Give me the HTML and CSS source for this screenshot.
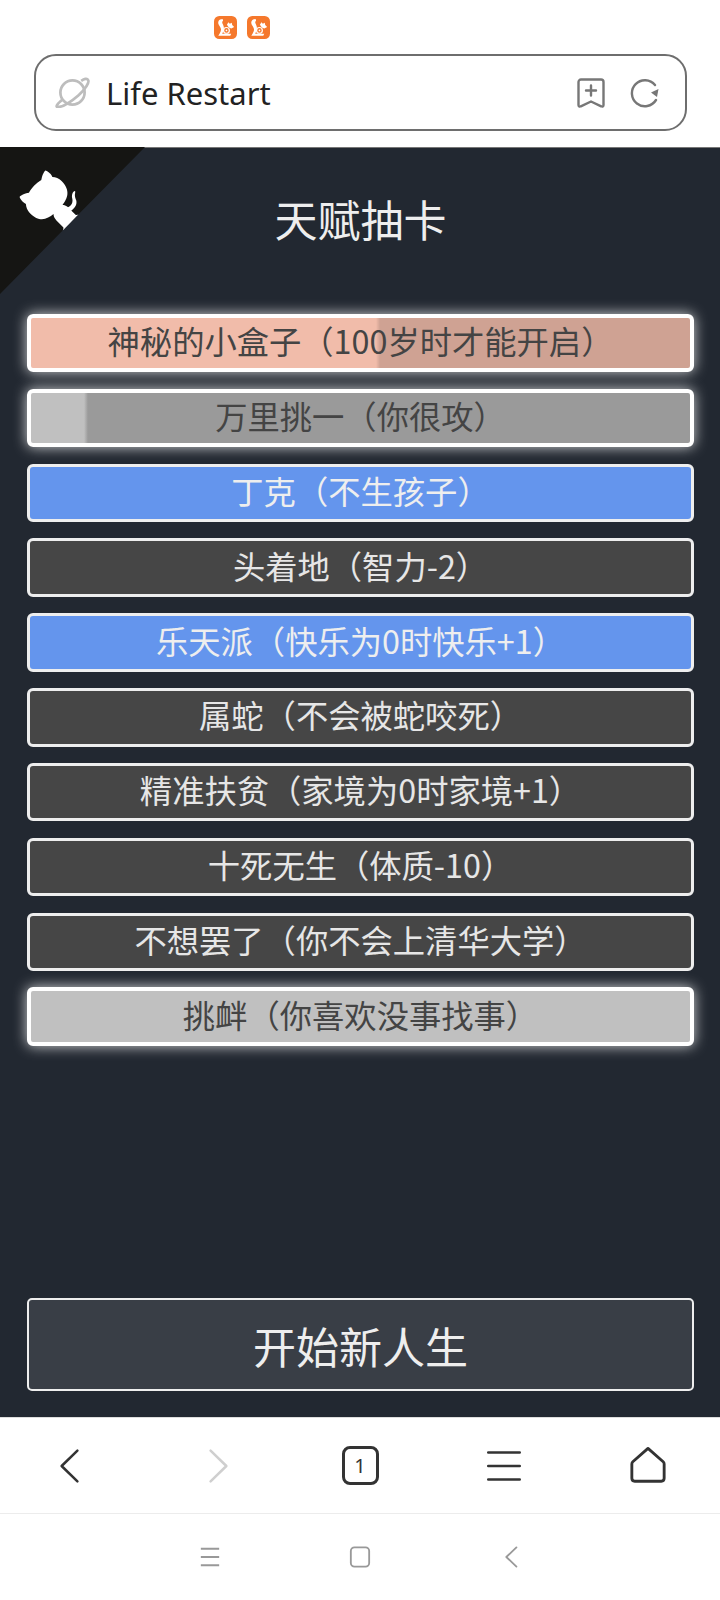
FILE: index.html
```html
<!DOCTYPE html>
<html lang="zh-CN">
<head>
  <meta charset="UTF-8">
  <meta name="viewport" content="width=device-width, initial-scale=1.0">
  <title>Life Restart</title>
  <link rel="stylesheet" href="styles.css">
</head>
<body>
  <!-- browser top -->
  <header class="top">
    <div class="status">
      <svg class="uc" viewBox="0 0 24 24"><rect width="24" height="24" rx="5.5" fill="#f5782c"/><path d="M9 3C5 3 3.500 6 5 9c1.500 2.500 3 4 2 7-.5 1.500-1.500 3-2.500 4.500H17l1-2H8.500C10.500 15 11 12 9.500 9 8.500 7.500 8 6 9.500 5z" fill="#fff"/><path d="M13.500 9l1.500-2.500 1.500 1.500 2-1 .5 2.500 2 2-3 1.500-2.500-1z" fill="#fff"/><circle cx="13" cy="15" r="3" fill="none" stroke="#fff" stroke-width="1.300"/><circle cx="13" cy="15" r=".9" fill="#fff"/></svg>
      <svg class="uc" viewBox="0 0 24 24"><rect width="24" height="24" rx="5.5" fill="#f5782c"/><path d="M9 3C5 3 3.500 6 5 9c1.500 2.500 3 4 2 7-.5 1.500-1.500 3-2.500 4.500H17l1-2H8.500C10.500 15 11 12 9.500 9 8.500 7.500 8 6 9.500 5z" fill="#fff"/><path d="M13.500 9l1.500-2.500 1.500 1.500 2-1 .5 2.500 2 2-3 1.500-2.500-1z" fill="#fff"/><circle cx="13" cy="15" r="3" fill="none" stroke="#fff" stroke-width="1.300"/><circle cx="13" cy="15" r=".9" fill="#fff"/></svg>
    </div>
    <div class="address">
      <svg class="planet" viewBox="0 0 36 32" fill="none" stroke="#bdbdbd" stroke-width="2.800">
        <circle cx="18" cy="16" r="12.500"/>
        <path d="M8 23C2 28 0 31 3 31c5 0 14-6 21-12S36 5 34 3c-1-2-4-1-7 1"/>
      </svg>
      <span class="address-text">Life Restart</span>
      <svg class="bookmark" viewBox="0 0 28 30" fill="none" stroke="#777" stroke-width="2.400" stroke-linejoin="round" stroke-linecap="round">
        <path d="M4 1.500h20a2.500 2.500 0 0 1 2.500 2.500v23c0 1.500-1 2-2.300 1.300L14 23.500 3.800 28.300C2.500 29 1.500 28.500 1.500 27V4A2.500 2.500 0 0 1 4 1.500z"/>
        <path d="M14 7.500v10M9 12.500h10"/>
      </svg>
      <svg class="reload" viewBox="0 0 30 30" fill="none" stroke="#777" stroke-width="2.400" stroke-linecap="round">
        <path d="M26 22A13 13 0 1 1 25 7"/>
        <path d="M28.500 11l-1.500 8-6-4.500z" fill="#777" stroke="none"/>
      </svg>
    </div>
  </header>

  <main class="game">
    <!-- github corner -->
    <svg class="corner" viewBox="0 0 250 250" preserveAspectRatio="none">
      <path d="M0,0 L115,115 L130,115 L142,142 L250,250 L250,0 Z" fill="#151513"/>
      <path d="M128.3,109.0 C113.8,99.7 119.0,89.6 119.0,89.6 C122.0,82.7 120.5,78.6 120.5,78.6 C119.2,72.0 123.4,76.3 123.4,76.3 C127.3,80.9 125.5,87.3 125.5,87.3 C122.9,97.6 130.6,101.9 134.4,103.2" fill="#fff"/>
      <path d="M115.0,115.0 C114.9,115.1 118.7,116.5 119.8,115.4 L133.7,101.6 C136.9,99.2 139.9,98.4 142.2,98.6 C133.8,88.0 127.5,74.4 143.8,58.0 C148.5,53.4 154.0,51.2 159.7,51.0 C160.3,49.4 163.2,43.6 171.4,40.1 C171.4,40.1 176.1,42.5 178.8,56.2 C183.1,58.6 187.2,61.8 190.9,65.4 C194.5,69.0 197.7,73.2 200.1,77.6 C213.8,80.2 216.3,84.9 216.3,84.9 C212.7,93.1 206.9,96.0 205.4,96.6 C205.1,102.4 203.0,107.8 198.3,112.5 C181.9,128.9 168.3,122.5 157.7,114.1 C157.9,116.9 156.7,120.9 152.7,124.9 L141.0,136.5 C139.8,137.7 141.6,141.9 141.8,141.8 Z" fill="#fff"/>
    </svg>

    <h1 class="title">天赋抽卡</h1>

    <ul class="talents">
      <li class="talent legend">神秘的小盒子（100岁时才能开启）</li>
      <li class="talent silver">万里挑一（你很攻）</li>
      <li class="talent blue">丁克（不生孩子）</li>
      <li class="talent plain">头着地（智力-2）</li>
      <li class="talent blue">乐天派（快乐为0时快乐+1）</li>
      <li class="talent plain">属蛇（不会被蛇咬死）</li>
      <li class="talent plain">精准扶贫（家境为0时家境+1）</li>
      <li class="talent plain">十死无生（体质-10）</li>
      <li class="talent plain">不想罢了（你不会上清华大学）</li>
      <li class="talent gray">挑衅（你喜欢没事找事）</li>
    </ul>

    <button class="start">开始新人生</button>
  </main>

  <!-- browser bottom -->
  <nav class="toolbar">
    <svg class="tool" viewBox="0 0 40 40" fill="none" stroke="#333" stroke-width="2.800" stroke-linecap="round" stroke-linejoin="round"><path d="M26 3L8.500 20 26 37"/></svg>
    <svg class="tool" viewBox="0 0 40 40" fill="none" stroke="#cfcfcf" stroke-width="2.800" stroke-linecap="round" stroke-linejoin="round"><path d="M14 3L31.500 20 14 37"/></svg>
    <div class="tab-count">1</div>
    <svg class="tool" viewBox="0 0 40 40" fill="none" stroke="#333" stroke-width="2.800" stroke-linecap="round"><path d="M2.500 5h35M2.500 20h35M2.500 35h35"/></svg>
    <svg class="tool home" viewBox="0 0 40 40" fill="none" stroke="#333" stroke-width="3" stroke-linejoin="round"><path d="M20 1.500L36 15.500c.8.700 1 1.200 1 2.500v15c0 2-1 3-3 3H6c-2 0-3-1-3-3V18c0-1.300.2-1.800 1-2.500z"/></svg>
  </nav>

  <nav class="sysbar">
    <svg class="sys" viewBox="0 0 24 24" fill="none" stroke="#999" stroke-width="2"><path d="M2 3h20M2 12h20M2 21h20"/></svg>
    <svg class="sys" viewBox="0 0 24 24" fill="none" stroke="#999" stroke-width="2"><rect x="2" y="1.500" width="20" height="21" rx="4"/></svg>
    <svg class="sys" viewBox="0 0 24 24" fill="none" stroke="#999" stroke-width="2" stroke-linecap="round" stroke-linejoin="round"><path d="M19 1.500L8 12l11 10.500"/></svg>
  </nav>
</body>
</html>
```

FILE: styles.css
```css
* {
  margin: 0;
  padding: 0;
  box-sizing: border-box;
}

body {
  width: 720px;
  height: 1600px;
  overflow: hidden;
  background: #fff;
  font-family: "Noto Sans CJK SC", "Noto Sans", sans-serif;
  display: flex;
  flex-direction: column;
}

/* browser top */
.top {
  height: 148px;
  background: #fff;
  border-bottom: 1px solid #777;
}

.status {
  height: 54px;
  padding: 16px 0 0 214px;
  display: flex;
  gap: 10px;
  align-items: flex-start;
}

.uc {
  width: 23px;
  height: 23px;
}

.address {
  height: 77px;
  margin: 0 33px 0 34px;
  padding: 0 25px 0 19px;
  border: 2px solid #6e6e6e;
  border-radius: 22px;
  display: flex;
  align-items: center;
}

.planet {
  width: 35px;
  height: 31px;
}

.address-text {
  margin-left: 16px;
  flex: 1;
  font-family: "Noto Sans", sans-serif;
  font-size: 31px;
  color: #222;
}

.bookmark {
  width: 28px;
  height: 30px;
}

.reload {
  width: 30px;
  height: 30px;
  margin-left: 25px;
}

/* game */
.game {
  position: relative;
  height: 1269px;
  padding: 0 26px 26px 27px;
  background: #222831;
  display: flex;
  flex-direction: column;
}

.corner {
  position: absolute;
  top: -1px;
  left: 0;
  width: 145px;
  height: 147px;
  transform: scaleX(-1);
}

.title {
  height: 166px;
  padding-top: 33px;
  text-align: center;
  font-size: 43px;
  font-weight: 400;
  line-height: 74px;
  color: #eee;
}

.talents {
  list-style: none;
  display: flex;
  flex-direction: column;
  gap: 16.45px;
  flex: 1;
}

.talent {
  height: 58.4px;
  padding-bottom: 6px;
  border: 3.5px solid #eee;
  border-radius: 6px;
  display: flex;
  justify-content: center;
  align-items: center;
  font-size: 32.3px;
}

.legend {
  background: linear-gradient(90deg, #f1bcaa 0, #f1bcaa 345px, #cfa293 349px);
  color: #444;
  border: 4px solid #fff;
  box-shadow: 0 0 14px rgba(255, 255, 255, 0.8);
}

.silver {
  background: linear-gradient(90deg, #c0c0c0 0, #c0c0c0 53px, #9a9a9a 57px);
  color: #444;
  border: 4px solid #fff;
  box-shadow: 0 0 14px rgba(255, 255, 255, 0.8);
}

.gray {
  background: #c0c0c0;
  color: #444;
  border: 4px solid #fff;
  box-shadow: 0 0 14px rgba(255, 255, 255, 0.8);
}

.blue {
  background: #6495ed;
  color: #eee;
}

.plain {
  background: #464646;
  color: #e6e6e6;
}

.start {
  height: 93px;
  border: 2px solid #eee;
  border-radius: 5px;
  background: #393e46;
  color: #eee;
  font-family: inherit;
  font-size: 43px;
}

/* browser bottom */
.toolbar {
  height: 97px;
  border-top: 1px solid #ddd;
  border-bottom: 1px solid #ececec;
  display: grid;
  grid-template-columns: repeat(5, 144px);
  justify-items: center;
  align-items: center;
}

.tool {
  width: 36px;
  height: 36px;
}

.home {
  width: 38px;
  height: 38px;
}

.tab-count {
  width: 37px;
  height: 39px;
  border: 3px solid #333;
  border-radius: 8px;
  text-align: center;
  font-family: "Noto Sans", sans-serif;
  font-size: 20px;
  line-height: 33px;
  color: #333;
}

.sysbar {
  height: 86px;
  display: grid;
  grid-template-columns: repeat(3, 150px);
  justify-content: center;
  justify-items: center;
  align-items: center;
}

.sys {
  width: 22px;
  height: 22px;
}
```
